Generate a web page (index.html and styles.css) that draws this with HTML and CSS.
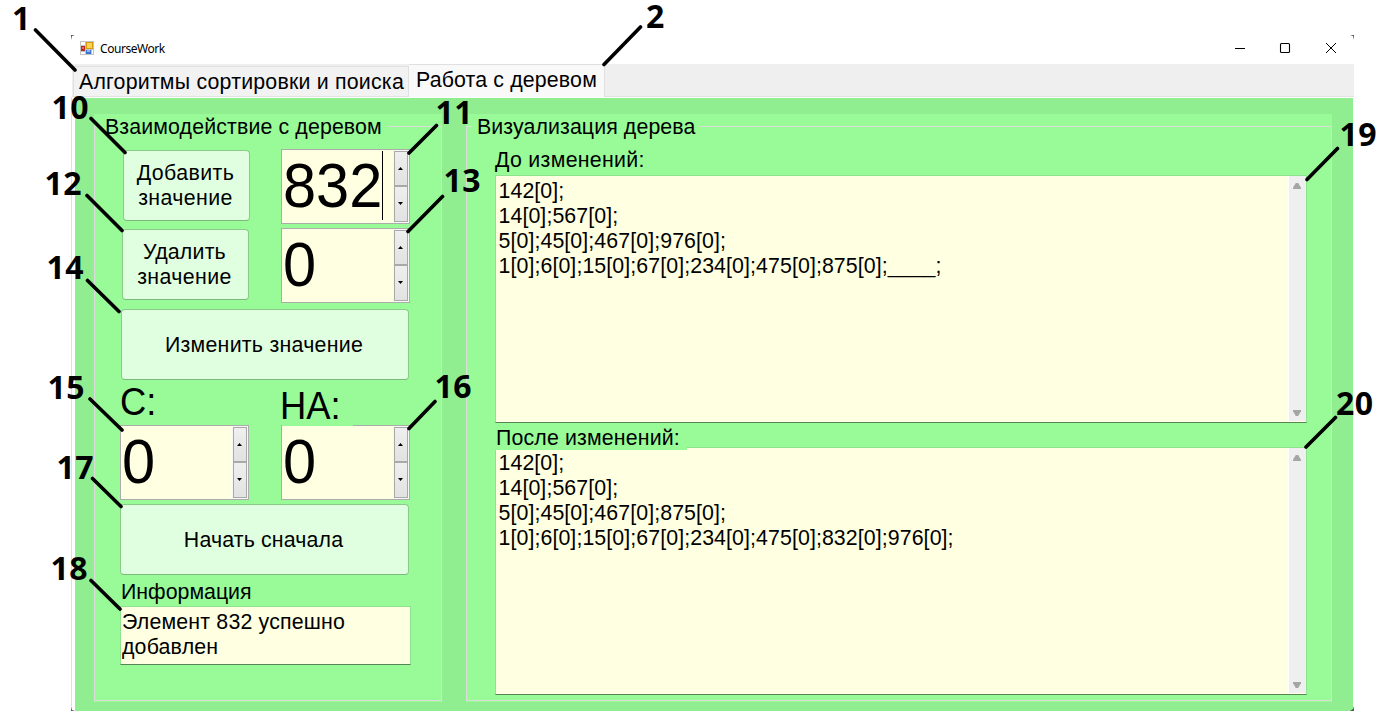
FILE: index.html
```html
<!DOCTYPE html>
<html lang="ru">
<head>
<meta charset="utf-8">
<title>CourseWork</title>
<link rel="stylesheet" href="styles.css">
</head>
<body>
<main class="window">
  <header class="titlebar">
    <svg class="app-icon" width="14" height="14" viewBox="0 0 14 14" shape-rendering="crispEdges">
      <rect width="14" height="14" fill="#c3c3c3"/>
      <path d="M1 1h4v3H1zM1 11h4v2H1zM12 9h1v4h-1z" fill="#fff"/>
      <rect x="6" y="1" width="7" height="7" fill="#d79a13"/><rect x="7" y="2" width="5" height="5" fill="#fbd44e"/>
      <rect x="1" y="5" width="4" height="5" fill="#b52a22"/><rect x="2" y="6" width="2" height="2" fill="#dd6a5a"/>
      <rect x="6" y="9" width="5" height="4" fill="#3b74d8"/><rect x="7" y="9" width="3" height="2" fill="#8db8f5"/>
    </svg>
    <span class="title">CourseWork</span>
    <svg class="controls" width="104" height="12" viewBox="0 0 104 12" fill="none" stroke="#000">
      <path d="M1 6.500h10"/><rect x="46.500" y="1.500" width="9" height="9" rx="1" stroke-width="1.1"/><path d="M92 1l10 10M102 1L92 11"/>
    </svg>
  </header>
  <nav class="tabs">
    <div class="tab tab-sort"><span>Алгоритмы сортировки и поиска</span></div>
    <div class="tab tab-tree"><span>Работа с деревом</span></div>
  </nav>
  <div class="page">
    <section class="group edit">
      <h2 class="legend t-edit">Взаимодействие с деревом</h2>
      <div class="fields">
        <div class="pair">
          <button class="btn small add"><span class="wide">Добавить</span><span class="wide">значение</span></button>
          <div class="spin"><span class="num">832</span><i class="caret"></i><div class="arrows"><b class="up"></b><b class="down"></b></div></div>
        </div>
        <div class="pair second">
          <button class="btn small"><span class="t-del">Удалить</span><span class="wide">значение</span></button>
          <div class="spin"><span class="num">0</span><div class="arrows"><b class="up"></b><b class="down"></b></div></div>
        </div>
        <button class="btn change"><span class="t-change">Изменить значение</span></button>
        <div class="pair heads"><span class="from">С:</span><span class="to">НА:</span></div>
        <div class="pair">
          <div class="spin"><span class="num">0</span><div class="arrows"><b class="up"></b><b class="down"></b></div></div>
          <div class="spin clipped"><span class="num">0</span><div class="arrows"><b class="up"></b><b class="down"></b></div></div>
        </div>
        <button class="btn reset"><span class="t-reset">Начать сначала</span></button>
        <div class="info-label"><span class="t-info">Информация</span></div>
        <div class="box info"><div class="lines"><span class="t-msg">Элемент 832 успешно</span><span class="t-msg">добавлен</span></div></div>
      </div>
    </section>
    <section class="group view">
      <h2 class="legend t-view">Визуализация дерева</h2>
      <div class="label before"><span class="t-before">До изменений:</span></div>
      <div class="box log first">
        <div class="lines"><span>142[0];</span><span>14[0];567[0];</span><span>5[0];45[0];467[0];976[0];</span><span>1[0];6[0];15[0];67[0];234[0];475[0];875[0];____;</span></div>
        <div class="scroll"><b class="s-up"></b><b class="s-down"></b></div>
      </div>
      <div class="label after"><span class="t-after">После изменений:</span></div>
      <div class="box log last">
        <div class="lines"><span>142[0];</span><span>14[0];567[0];</span><span>5[0];45[0];467[0];875[0];</span><span>1[0];6[0];15[0];67[0];234[0];475[0];832[0];976[0];</span></div>
        <div class="scroll"><b class="s-up"></b><b class="s-down"></b></div>
      </div>
    </section>
  </div>
</main>
<svg class="callouts" width="1380" height="728" viewBox="0 0 1380 728">
  <path class="corner" d="M71 35h4l-3 1-1 4zM1354 35h-4l3 1 1 4zM71 711v-4l1 3 3 1zM1354 711v-5l-1 3-3 2z"/>
  <path class="leader" d="M35.500 30L75 70M640.500 27L604 64.500M91 118.500L125 152.500M436.500 125.500L409 153M87 195.500L122 230.500M442.500 196.500L408 231.500M87.500 280.500L119 311.500M90 399L122 430M435 401.500L409 428.500M92.500 478.500L121 506.500M91 580.500L120 609M1337.500 148.500L1307 179.500M1335.500 417.500L1306 447"/>
  <g class="marks">
    <text x="12" y="30">1</text><text x="646" y="28">2</text>
    <text x="51.500" y="119">10</text><text x="435.500" y="124">11</text>
    <text x="44.500" y="195">12</text><text x="443.500" y="192">13</text>
    <text x="46.500" y="279">14</text><text x="47.500" y="399">15</text>
    <text x="434.500" y="398">16</text><text x="56.500" y="479">17</text>
    <text x="50.500" y="580">18</text><text x="1339.500" y="146">19</text>
    <text x="1336" y="415">20</text>
  </g>
</svg>
</body>
</html>
```
FILE: styles.css
```css
* { box-sizing: border-box; }
body {
  margin: 0; height: 728px; overflow: hidden; background: #fff; color: #000;
  padding: 35px 26px 0 71px;
  font: 21.33px/25px "Liberation Sans", Arial, sans-serif;
}
.window { height: 676px; display: flex; flex-direction: column; }
.titlebar { height: 29px; display: flex; align-items: center; padding: 0 16px 3px 9px; }
.title { font: 12px/16px "Noto Sans", "Open Sans", sans-serif; margin: 1px 0 0 6px; letter-spacing: -0.45px; }
.controls { margin-left: auto; }
span { white-space: nowrap; }
.tabs { height: 33px; display: flex; background: #efefef; border-bottom: 1px solid #e2e2e2; margin-left: 1px; padding-left: 1px; }
.tab { background: #f2f2f2; border: 1px solid #e0e0e0; border-bottom: 0; }
.tab-sort { width: 336px; margin-top: 2px; padding: 3px 0 0 5px; letter-spacing: 0.21px; }
.tab-tree { width: 196px; height: 33px; background: #f9f9f9; padding: 3px 0 0 7px; border-left: 0; letter-spacing: 0.15px; }
.page {
  flex: 1; display: flex; gap: 24px; background: #90ee90; border-top: 1px solid #fff;
  margin: 0 1px 0 4px; padding: 16px 21px 9px 19px; box-shadow: -3px 0 #fff, -4px 0 #dfdfdf;
}
.group { background: #98fb98; position: relative; display: flex; flex-direction: column; }
.group::before { content: ""; position: absolute; inset: 12px 0 1px 0; border: 1px solid #dcdcdc; }
.edit { width: 348px; }
.view { flex: 1; padding-left: 29px; }
.legend { position: relative; font: inherit; margin: 0; height: 25px; background: #98fb98; white-space: nowrap; align-self: flex-start; padding: 1px 5px 0; }
.t-edit { margin-left: 6px; letter-spacing: 0.13px; }
.t-view { margin-left: -23px; letter-spacing: 0.1px; }
.fields { position: relative; padding: 10px 0 0 26px; width: 316px; display: flex; flex-direction: column; }
.pair { display: grid; grid-template-columns: 129px 129px; column-gap: 32px; }
.second { margin-top: 4px; }
.btn { font: inherit; color: #000; height: 71px; padding: 0 2px 0 0; margin: 0; background: #e0ffe0; border: 1px solid #8acb8a; border-bottom-color: #7db87d; border-radius: 4px; display: flex; flex-direction: column; align-items: center; justify-content: center; }
.wide { letter-spacing: 0.4px; }
.t-del { letter-spacing: 0.2px; }
.t-change { letter-spacing: 0.27px; padding-top: 1px; }
.t-reset { letter-spacing: 0.15px; padding-top: 1px; }
.small { width: 127px; margin: 1px 0 0 2px; }
.add { margin-left: 3px; }
.change { width: 288px; margin: 6px 0 0 1px; }
.reset { width: 289px; margin-top: 4px; }
.spin { height: 75px; background: #ffffe1; border: 1px solid #aaadaa; display: flex; position: relative; }
.num { font-size: 63px; line-height: 71px; padding: 0 0 0 1px; transform: scaleX(0.945); transform-origin: 0 0; }
.caret { width: 1px; height: 69px; background: #000; position: absolute; left: 100px; top: 1px; }
.arrows { margin-left: auto; flex: none; width: 16px; background: #f8f8f8; padding: 1px; display: grid; grid-template-rows: 35px 36px; }
.arrows b { border: 1px solid #a9a9a9; background: linear-gradient(#efefef, #e2e2e2); display: grid; place-items: center; padding-right: 1px; }
.arrows .down { padding-bottom: 1px; }
.arrows b::after { content: ""; width: 5px; height: 3px; background: #000; clip-path: polygon(50% 0, 100% 100%, 0 100%); }
.arrows .down::after { transform: rotate(180deg); }
.heads { height: 45px; font-size: 38.5px; line-height: 45px; }
.heads span { transform: scaleX(0.945); transform-origin: 0 0; }
.from { margin-top: -1px; }
.to { margin: 3px 0 0 -1px; }
.clipped::before { content: ""; position: absolute; left: 0; top: -1px; width: 71px; height: 1px; background: #98fb98; }
.info-label { height: 26px; margin-top: 5px; padding-left: 1px; }
.box { background: #ffffe1; border: 1px solid #8ee38e; border-bottom-color: #578557; display: flex; position: relative; }
.info { width: 291px; height: 59px; padding: 3px 0 0 1px; }
.t-msg { letter-spacing: 0.18px; }
.lines { display: flex; flex-direction: column; letter-spacing: 0.09px; }
.label { position: relative; height: 25px; }
.before { margin-top: 8px; padding-top: 1px; letter-spacing: 0.3px; }
.after { margin-top: 3px; padding-left: 1px; letter-spacing: 0.15px; }
.log { width: 812px; padding: 3px 0 0 2.5px; }
.first { height: 248px; margin-top: 3px; }
.last { height: 248px; margin-top: -4px; }
.last::before { content: ""; position: absolute; left: -1px; top: -1px; width: 192px; height: 3px; background: #98fb98; }
.scroll { margin: -3px 0 1px auto; width: 18px; background: #efefef; border-left: 1px solid #fff; display: flex; flex-direction: column; justify-content: space-between; align-items: center; padding: 7px 1px 5px 0; }
.scroll b { width: 8px; height: 6px; background: #a6a6a6; clip-path: polygon(35% 0, 65% 0, 100% 80%, 100% 100%, 0 100%, 0 80%); }
.scroll .s-down { transform: rotate(180deg); }
.callouts { position: absolute; left: 0; top: 0; pointer-events: none; }
.leader { stroke: #000; stroke-width: 3.6; stroke-linecap: round; fill: none; }
.corner { fill: #555; }
.marks { font: 700 32px "Open Sans", sans-serif; letter-spacing: 0.5px; }
```
